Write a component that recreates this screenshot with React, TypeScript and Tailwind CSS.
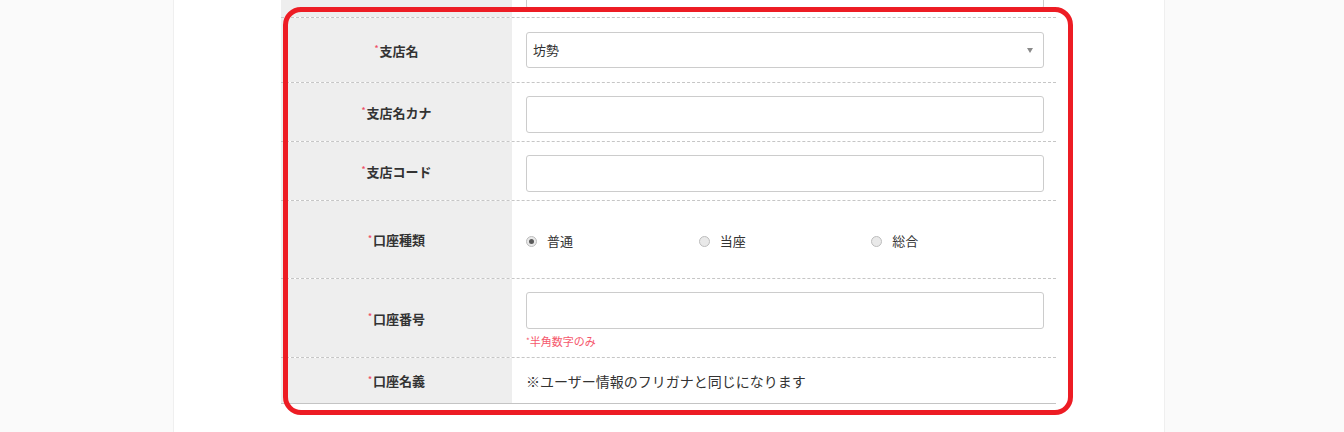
import React from 'react';

const font = { fontFamily: '"Noto Sans CJK JP", "Noto Sans", sans-serif' };

function Label({ text }: { text: string }) {
  return (
    <div className="w-[231px] shrink-0 bg-[#eeeeee] flex items-center justify-center">
      <span className="text-[13px] font-bold text-[#333] leading-none flex items-center">
        <span className="text-[8px] text-[#ee5068] relative top-[-2px] mr-[1px]">*</span>
        {text}
      </span>
    </div>
  );
}

function Radio({ label, checked }: { label: string; checked?: boolean }) {
  return (
    <div className="flex-1 flex items-center">
      <span className="w-[11px] h-[11px] rounded-full border border-[#bdbdbd] bg-[#e9e9e9] flex items-center justify-center">
        {checked && <span className="w-[5px] h-[5px] rounded-full bg-[#5a5a5a]" />}
      </span>
      <span className="ml-[10px] text-[13px] text-[#333]">{label}</span>
    </div>
  );
}

function TextBox() {
  return <div className="h-[37px] rounded-[3px] border border-[#cccccc] bg-white" />;
}

export default function App() {
  return (
    <div className="relative min-h-screen bg-[#fafafa]" style={font}>
      <div className="ml-[173px] w-[992px] h-[432px] bg-white border-x border-[#efefef]">
        <div className="ml-[107px] w-[775px]">
          {/* row cut off at the top */}
          <div className="flex h-[17px] overflow-hidden">
            <div className="w-[231px] shrink-0 bg-[#eeeeee]" />
            <div className="flex-1 flex flex-col justify-end pl-[14px] pr-[12px] pb-[8px]">
              <div className="shrink-0">
                <TextBox />
              </div>
            </div>
          </div>

          <div className="flex border-t border-dashed border-[#c6c6c6]">
            <Label text="支店名" />
            <div className="flex-1 pl-[14px] pr-[12px] pt-[14px] pb-[14px]">
              <div className="h-[36px] rounded-[3px] border border-[#cccccc] bg-white flex items-center justify-between pl-[6px] pr-[10px]">
                <span className="text-[13px] text-[#333]">坊勢</span>
                <span className="w-0 h-0 border-l-[3px] border-r-[3px] border-t-[5px] border-l-transparent border-r-transparent border-t-[#8a8a8a]" />
              </div>
            </div>
          </div>

          <div className="flex border-t border-dashed border-[#c6c6c6]">
            <Label text="支店名カナ" />
            <div className="flex-1 pl-[14px] pr-[12px] pt-[13px] pb-[8px]">
              <TextBox />
            </div>
          </div>

          <div className="flex border-t border-dashed border-[#c6c6c6]">
            <Label text="支店コード" />
            <div className="flex-1 pl-[14px] pr-[12px] pt-[13px] pb-[8px]">
              <TextBox />
            </div>
          </div>

          <div className="flex h-[78px] border-t border-dashed border-[#c6c6c6]">
            <Label text="口座種類" />
            <div className="flex-1 flex items-center pl-[14px] pr-[12px] pt-[3px]">
              <Radio label="普通" checked />
              <Radio label="当座" />
              <Radio label="総合" />
            </div>
          </div>

          <div className="flex border-t border-dashed border-[#c6c6c6]">
            <Label text="口座番号" />
            <div className="flex-1 pl-[14px] pr-[12px] pt-[13px] pb-[10px]">
              <TextBox />
              <div className="mt-[6px] h-[12px] text-[11px] leading-[12px] text-[#f5586c]">
                <span className="text-[8px] align-top">*</span>半角数字のみ
              </div>
            </div>
          </div>

          <div className="flex h-[47px] border-y border-[#c6c6c6] [border-top-style:dashed] border-b-[#c4c4c4]">
            <Label text="口座名義" />
            <div className="flex-1 flex items-center pl-[14px] pt-[2px]">
              <span className="text-[14px] text-[#333]">※ユーザー情報のフリガナと同じになります</span>
            </div>
          </div>
        </div>
      </div>

      {/* red annotation frame */}
      <div className="absolute left-[283px] top-[7px] w-[790px] h-[408px] border-[5px] border-[#ed1c24] rounded-[18px] pointer-events-none" />
    </div>
  );
}
